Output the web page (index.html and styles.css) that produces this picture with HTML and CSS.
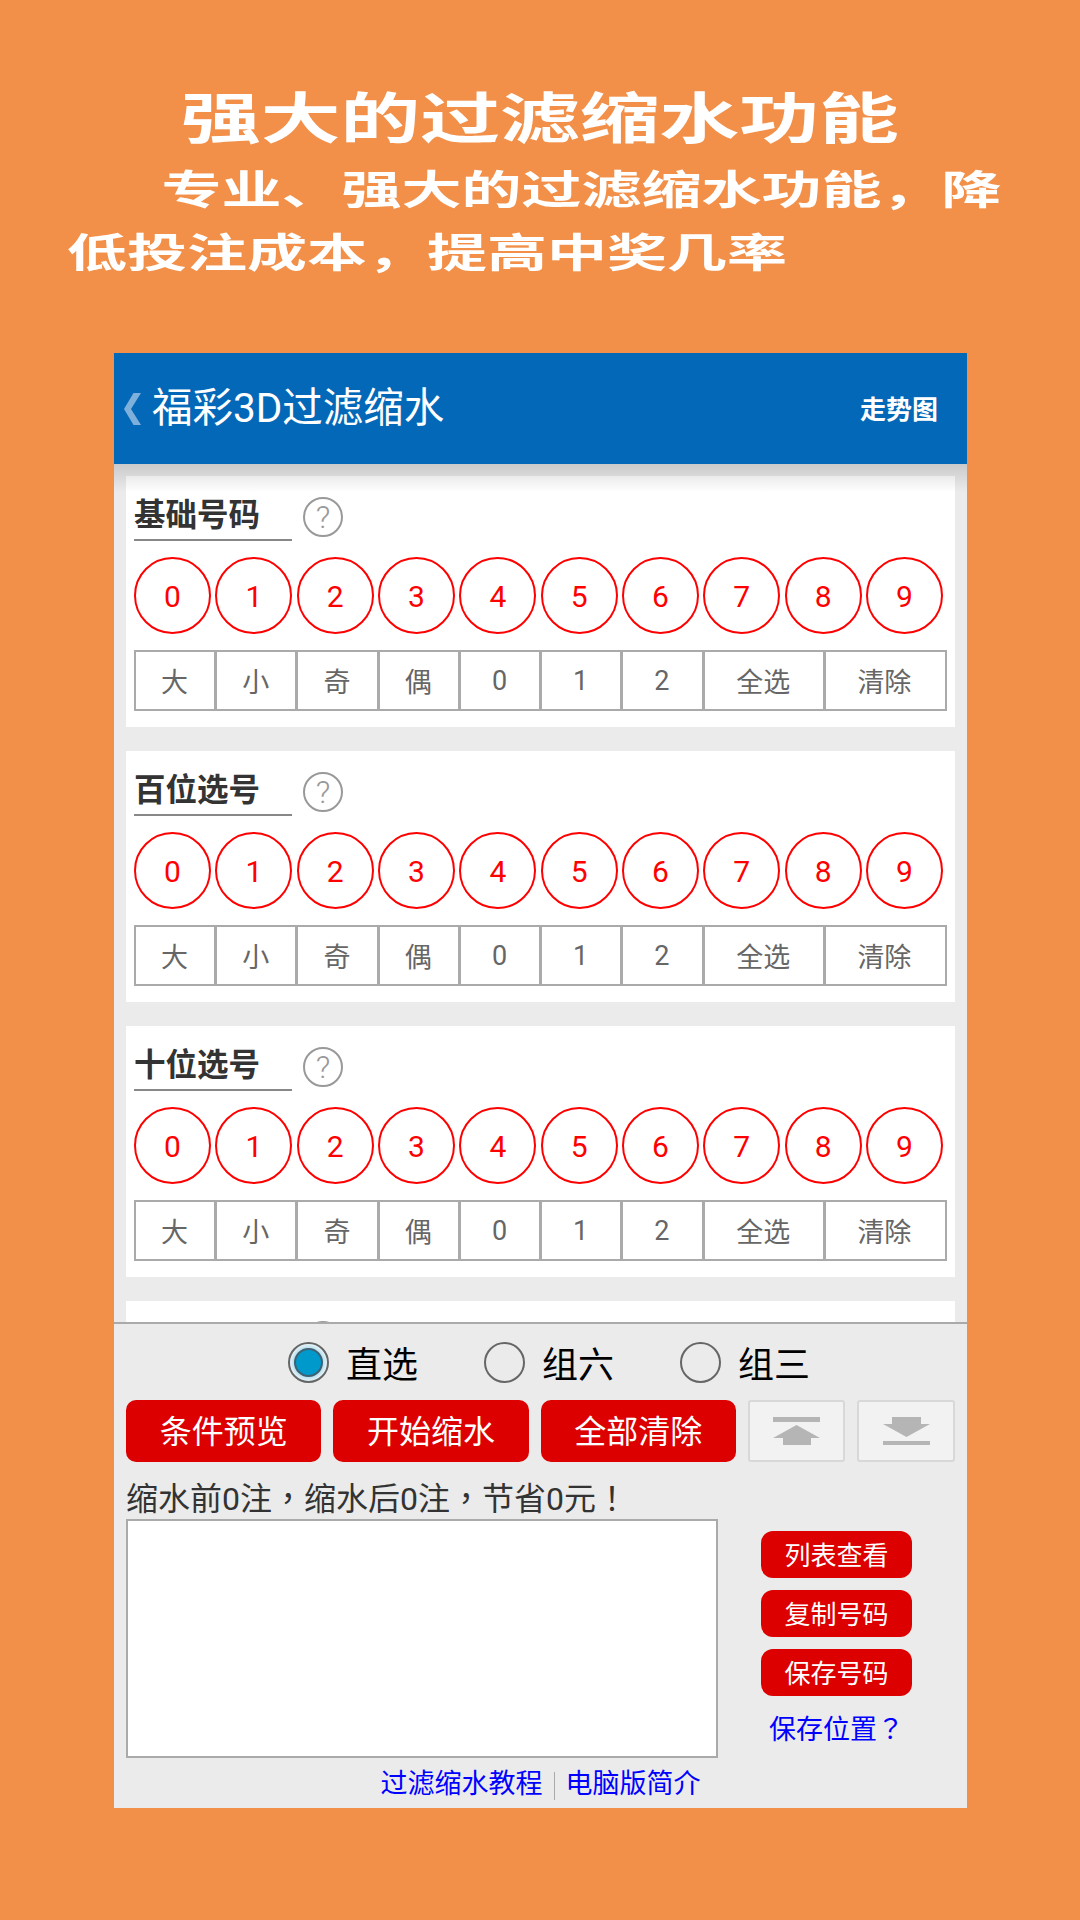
FILE: index.html
```html
<!DOCTYPE html>
<html lang="zh-CN">
<head>
    <meta charset="UTF-8">
    <title>福彩3D过滤缩水</title>
    <link rel="stylesheet" href="styles.css">
</head>
<body>
    <!-- Promo text -->
    <div class="hero">
        <h1 class="hero-title">强大的过滤缩水功能</h1>
        <p class="hero-text">专业、强大的过滤缩水功能，降低投注成本，提高中奖几率</p>
    </div>

    <div class="phone">
        <div class="app-header">
            <svg class="back-icon" viewBox="0 0 17 32"><polygon points="9.5,0 17,0 7,16 17,32 9.5,32 0,16"/></svg>
            <span class="app-title">福彩3D过滤缩水</span>
            <span class="app-link">走势图</span>
        </div>

        <div class="scroller">
            <div class="card">
                <div class="card-head">
                    <span class="card-title">基础号码</span>
                    <span class="help">?</span>
                </div>
                <div class="balls">
                    <span class="ball">0</span><span class="ball">1</span><span class="ball">2</span><span class="ball">3</span><span class="ball">4</span><span class="ball">5</span><span class="ball">6</span><span class="ball">7</span><span class="ball">8</span><span class="ball">9</span>
                </div>
                <div class="opts">
                    <span>大</span><span>小</span><span>奇</span><span>偶</span><span>0</span><span>1</span><span>2</span><span>全选</span><span>清除</span>
                </div>
            </div>
            <div class="card">
                <div class="card-head">
                    <span class="card-title">百位选号</span>
                    <span class="help">?</span>
                </div>
                <div class="balls">
                    <span class="ball">0</span><span class="ball">1</span><span class="ball">2</span><span class="ball">3</span><span class="ball">4</span><span class="ball">5</span><span class="ball">6</span><span class="ball">7</span><span class="ball">8</span><span class="ball">9</span>
                </div>
                <div class="opts">
                    <span>大</span><span>小</span><span>奇</span><span>偶</span><span>0</span><span>1</span><span>2</span><span>全选</span><span>清除</span>
                </div>
            </div>
            <div class="card">
                <div class="card-head">
                    <span class="card-title">十位选号</span>
                    <span class="help">?</span>
                </div>
                <div class="balls">
                    <span class="ball">0</span><span class="ball">1</span><span class="ball">2</span><span class="ball">3</span><span class="ball">4</span><span class="ball">5</span><span class="ball">6</span><span class="ball">7</span><span class="ball">8</span><span class="ball">9</span>
                </div>
                <div class="opts">
                    <span>大</span><span>小</span><span>奇</span><span>偶</span><span>0</span><span>1</span><span>2</span><span>全选</span><span>清除</span>
                </div>
            </div>
            <!-- Only the top edge of the fourth card shows above the panel -->
            <div class="card card-peek">
                <div class="card-head">
                    <span class="card-title"></span>
                    <span class="help"></span>
                </div>
            </div>
        </div>

        <div class="panel">
            <div class="radios">
                <div class="radio-item"><span class="radio checked"></span><span class="radio-label">直选</span></div>
                <div class="radio-item"><span class="radio"></span><span class="radio-label">组六</span></div>
                <div class="radio-item"><span class="radio"></span><span class="radio-label">组三</span></div>
            </div>

            <div class="actions">
                <button class="red-btn">条件预览</button>
                <button class="red-btn">开始缩水</button>
                <button class="red-btn">全部清除</button>
                <button class="icon-btn">
                    <svg viewBox="0 0 47 28"><rect x="0" y="0" width="47" height="5"/><polygon points="23.5,8 47,21 38,21 38,28 10,28 10,21 0,21"/></svg>
                </button>
                <button class="icon-btn">
                    <svg viewBox="0 0 47 28"><rect x="0" y="24" width="47" height="4"/><polygon points="9,0 38,0 38,7 47,7 23.5,20 0,7 9,7"/></svg>
                </button>
            </div>

            <div class="summary">缩水前0注<span class="punct" lang="zh-TW">，</span>缩水后0注<span class="punct" lang="zh-TW">，</span>节省0元<span class="punct" lang="zh-TW">！</span></div>

            <div class="result">
                <textarea class="numbers" readonly></textarea>
                <div class="side">
                    <button class="small-btn">列表查看</button>
                    <button class="small-btn">复制号码</button>
                    <button class="small-btn">保存号码</button>
                    <a class="save-link">保存位置<span class="punct" lang="zh-TW">？</span></a>
                </div>
            </div>

            <div class="links">
                <a>过滤缩水教程</a>
                <span class="links-sep"></span>
                <a>电脑版简介</a>
            </div>
        </div>
    </div>
</body>
</html>
```

FILE: styles.css
```css
* {
    box-sizing: border-box;
}
body {
    margin: 0;
    width: 1080px;
    height: 1920px;
    overflow: hidden;
    background: #f2904a;
    font-family: Roboto, "Noto Sans CJK SC", sans-serif;
}
.punct {
    font-family: "Noto Sans CJK TC", sans-serif;
}

/* Promo text */
.hero {
    height: 353px;
    padding-top: 87px;
    color: white;
    overflow: hidden;
}
.hero-title {
    margin: 0 0 8px;
    font-size: 55px;
    line-height: 64px;
    font-weight: 700;
    text-align: center;
    transform: scaleX(1.45);
}
.hero-text {
    width: 640px;
    margin: 0 0 0 67px;
    font-size: 40px;
    line-height: 63px;
    font-weight: 700;
    text-indent: 63px;
    transform: scaleX(1.5);
    transform-origin: left;
}

.phone {
    width: 853px;
    height: 1455px;
    margin-left: 114px;
    background: #ebebeb;
}

/* Header */
.app-header {
    display: flex;
    align-items: center;
    height: 111px;
    padding: 0 29px 0 10px;
    background: #0468b8;
    color: white;
}
.back-icon {
    width: 17px;
    height: 32px;
    margin-right: 11px;
    fill: #7fb0db;
}
.app-title {
    flex: 1;
    margin-bottom: 8px;
    font-size: 40.5px;
}
.app-link {
    margin-bottom: 2px;
    font-size: 26px;
    font-weight: 700;
}

/* Number cards */
.scroller {
    position: relative;
    height: 858px;
    padding-top: 12px;
    overflow: hidden;
}
.scroller::before {
    content: "";
    position: absolute;
    top: 0;
    left: 0;
    right: 0;
    height: 28px;
    background: linear-gradient(rgba(0, 0, 0, 0.14), rgba(0, 0, 0, 0));
}
.card {
    height: 251px;
    margin: 0 12px 24px;
    padding: 21px 8px 0;
    background: white;
}
.card-peek {
    padding-top: 20px;
}
.card-head {
    display: flex;
    gap: 11px;
    height: 44px;
}
.card-title {
    width: 158px;
    border-bottom: 2px solid #888;
    color: #333;
    font-size: 31.5px;
    font-weight: 700;
    line-height: 38px;
}
.help {
    display: flex;
    align-items: center;
    justify-content: center;
    width: 40px;
    height: 40px;
    border: 2px solid #999;
    border-radius: 50%;
    color: #999;
    font-size: 32px;
    font-weight: 300;
}
.balls {
    display: flex;
    justify-content: space-between;
    width: 809px;
    margin-top: 16px;
}
.ball {
    display: flex;
    align-items: center;
    justify-content: center;
    width: 77px;
    height: 77px;
    padding-top: 2px;
    border: 2px solid #f00;
    border-radius: 50%;
    color: #f00;
    font-size: 30px;
}
.opts {
    display: grid;
    grid-template-columns: repeat(7, 81.4fr) repeat(2, 121.5fr);
    width: 813px;
    height: 61px;
    margin-top: 16px;
    border-right: 2px solid #aaa;
}
.opts span {
    display: flex;
    align-items: center;
    justify-content: center;
    margin-left: -1px;
    padding-right: 2px;
    border: solid #aaa;
    border-width: 2px 0 2px 3px;
    color: #666;
    font-size: 27px;
}
.opts span:first-child {
    margin-left: 0;
    border-left-width: 2px;
}

/* Bottom panel */
.panel {
    position: relative;
    height: 486px;
    border-top: 2px solid #aaa;
    background: #ebebeb;
}
.radios {
    display: flex;
    gap: 66px;
    margin: 18px 0 0 174px;
}
.radio-item {
    display: flex;
    align-items: center;
    gap: 17px;
    height: 41px;
    color: black;
    font-size: 36px;
}
.radio-label {
    margin-bottom: 2px;
}
.radio {
    width: 41px;
    height: 41px;
    border: 2px solid #666;
    border-radius: 50%;
}
.radio.checked {
    display: flex;
    align-items: center;
    justify-content: center;
    background: radial-gradient(circle closest-side, #8fcde6 60%, #e8f4f9 100%);
}
.radio.checked::before {
    content: "";
    width: 25px;
    height: 25px;
    border: 2px solid #3f6172;
    border-radius: 50%;
    background: #0099cc;
}
.actions {
    display: flex;
    gap: 12px;
    height: 62px;
    margin-top: 17px;
    padding: 0 12px;
}
.red-btn {
    width: 195.33px;
    padding: 0 0 4px;
    border: none;
    border-radius: 10px;
    background: #dd0000;
    color: white;
    font: inherit;
    font-size: 32px;
}
.icon-btn {
    display: flex;
    align-items: center;
    justify-content: center;
    width: 97.5px;
    padding: 0;
    border: 2px solid #d8d8d8;
    border-radius: 3px;
    background: #f2f2f2;
}
.icon-btn svg {
    width: 47px;
    height: 28px;
    fill: #b5b5b5;
}
.summary {
    height: 38px;
    margin-top: 15px;
    padding-left: 12px;
    color: #333;
    font-size: 32px;
    line-height: 38px;
}
.result {
    display: flex;
    height: 239px;
    margin-top: 4px;
    padding: 0 12px;
}
.numbers {
    width: 592px;
    height: 239px;
    border: 2px solid #aaa;
    border-radius: 0;
    background: white;
    resize: none;
}
.side {
    display: flex;
    flex: 1;
    flex-direction: column;
    align-items: center;
    gap: 12px;
    padding-top: 12px;
}
.small-btn {
    width: 151px;
    height: 47px;
    padding: 0 0 2px;
    border: none;
    border-radius: 12px;
    background: #dd0000;
    color: white;
    font: inherit;
    font-size: 26px;
}
.save-link {
    height: 40px;
    color: #0000ff;
    font-size: 27px;
    line-height: 40px;
}
.links {
    display: flex;
    align-items: center;
    justify-content: center;
    gap: 11px;
    height: 28px;
    margin-top: 14px;
    color: #0000ff;
    font-size: 27px;
}
.links a {
    margin-bottom: 10px;
}
.links-sep {
    width: 1px;
    height: 28px;
    background: #aaa;
}
```
